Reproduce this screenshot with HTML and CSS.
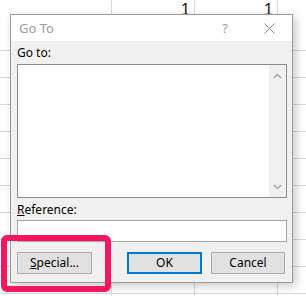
FILE: index.html
```html
<!DOCTYPE html>
<html lang="en">
<head>
    <meta charset="UTF-8">
    <title>Go To</title>
    <link rel="stylesheet" href="styles.css">
</head>
<body>
    <div class="sheet">
        <div class="sheet-row">
            <div class="cell"></div>
            <div class="cell"></div>
            <div class="cell">1</div>
            <div class="cell">1</div>
        </div>
    </div>

    <div class="dialog">
        <div class="titlebar">
            <span class="title">Go To</span>
            <span class="help">?</span>
            <svg class="close" width="11" height="11" viewBox="0 0 11 11">
                <path d="M0.5 0.5 L10.5 10.5 M10.5 0.5 L0.5 10.5" stroke="#8a8a8a" stroke-width="1" fill="none"/>
            </svg>
        </div>
        <div class="dialog-body">
            <label class="label">Go to:</label>
            <div class="listbox">
                <div class="list-items"></div>
                <div class="scrollbar">
                    <svg width="9" height="6" viewBox="0 0 9 6"><path d="M1 5 L4.5 1.5 L8 5" stroke="#a6a6a6" stroke-width="1.5" fill="none"/></svg>
                    <svg width="9" height="6" viewBox="0 0 9 6"><path d="M1 1 L4.5 4.5 L8 1" stroke="#a6a6a6" stroke-width="1.5" fill="none"/></svg>
                </div>
            </div>
            <label class="label label-ref"><u>R</u>eference:</label>
            <div class="textbox"></div>
            <div class="buttons">
                <button class="btn"><u>S</u>pecial...</button>
                <button class="btn btn-ok">OK</button>
                <button class="btn btn-cancel">Cancel</button>
            </div>
        </div>
    </div>

    <div class="callout"></div>
</body>
</html>
```

FILE: styles.css
```css
body {
    margin: 0;
    width: 306px;
    height: 296px;
    position: relative;
    overflow: hidden;
    background-color: #fff;
    background-image:
        repeating-linear-gradient(to right, transparent 0 82px, #dadada 82px 83px),
        repeating-linear-gradient(to bottom, transparent 0 26px, #dadada 26px 27px);
    background-position: 29px 0, 0 24px;
    font-family: "Noto Sans", "Open Sans", sans-serif;
}
.sheet-row {
    display: grid;
    grid-template-columns: 29px 83px 83px 83px;
}
.cell {
    height: 20px;
    line-height: 20px;
    font-family: "Liberation Sans", sans-serif;
    font-size: 16px;
    text-align: right;
    padding-right: 5px;
    color: #111;
}
.dialog {
    position: absolute;
    left: 10px;
    top: 14px;
    width: 283px;
    height: 269px;
    box-sizing: border-box;
    border: 1px solid #9b9b9b;
    background: #f0f0f0;
    box-shadow: 3px 3px 9px rgba(0, 0, 0, 0.22);
    display: flex;
    flex-direction: column;
}
.titlebar {
    height: 30px;
    background: #fff;
    display: flex;
    align-items: center;
    padding-left: 8px;
}
.title {
    font-size: 13px;
    color: #9c9c9c;
    flex: 1;
}
.help {
    font-size: 13px;
    color: #9c9c9c;
    margin-right: 36px;
}
.close {
    margin-right: 17px;
}
.dialog-body {
    padding: 3px 5px 8px 6px;
    display: flex;
    flex-direction: column;
}
.label {
    font-size: 12px;
    line-height: 17px;
    color: #000;
    margin-bottom: 3px;
}
.label-ref {
    margin-top: 3px;
    margin-bottom: 2px;
}
.listbox {
    height: 134px;
    box-sizing: border-box;
    border: 1px solid #868a92;
    background: #fff;
    display: flex;
}
.list-items {
    flex: 1;
}
.scrollbar {
    width: 17px;
    background: #f0f0f0;
    display: flex;
    flex-direction: column;
    justify-content: space-between;
    align-items: center;
    padding: 8px 0 7px;
}
.scrollbar svg {
    display: block;
}
.textbox {
    height: 22px;
    box-sizing: border-box;
    border: 1px solid #a6a6a6;
    background: #fff;
}
.buttons {
    display: flex;
    margin-top: 10px;
}
.btn {
    width: 75px;
    height: 22px;
    box-sizing: border-box;
    border: 1px solid #adadad;
    background: #e1e1e1;
    font-family: "Noto Sans", "Open Sans", sans-serif;
    font-size: 12px;
    color: #000;
    padding: 0;
    line-height: 18px;
}
.btn-ok {
    margin-left: 35px;
    border: 2px solid #0078d7;
}
.btn-cancel {
    margin-left: 9px;
    width: 74px;
}
.callout {
    position: absolute;
    left: 1px;
    top: 235px;
    width: 110px;
    height: 57px;
    box-sizing: border-box;
    border: 6px solid #f4175d;
    border-radius: 6px;
}
```
